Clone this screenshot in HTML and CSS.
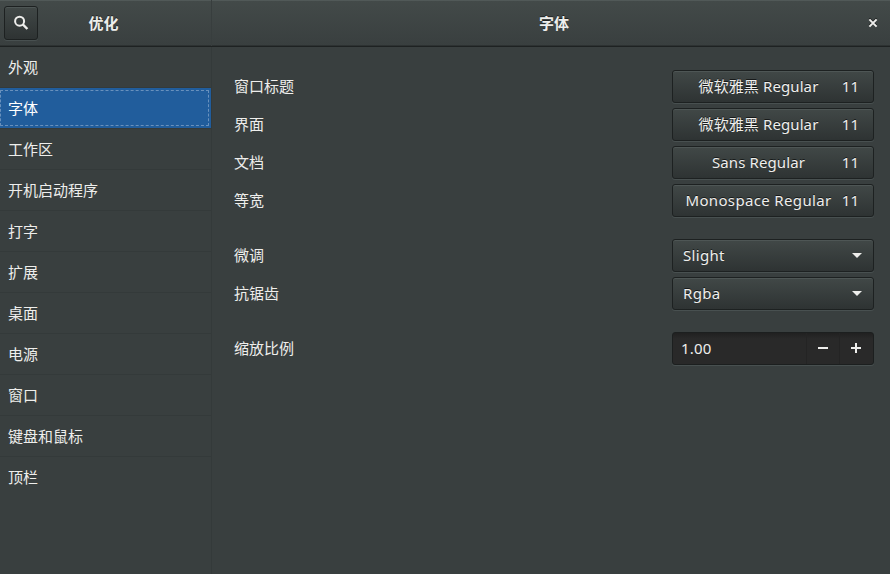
FILE: index.html
```html
<!DOCTYPE html>
<html lang="zh-CN">
<head>
<meta charset="utf-8">
<title>优化</title>
<link rel="stylesheet" href="styles.css">
</head>
<body>
<div class="window">
  <header class="titlebar">
    <div class="titlebar-side">
      <button class="button search" aria-label="搜索"><svg width="16" height="16" viewBox="0 0 16 16"><circle cx="6.6" cy="6.2" r="4.5" fill="none" stroke="#eeeeec" stroke-width="2"/><path d="M9.8 9.4L14.4 14" stroke="#eeeeec" stroke-width="2.4"/></svg></button>
      <h1 class="title">优化</h1>
    </div>
    <div class="titlebar-main">
      <h2 class="title">字体</h2>
      <button class="close" aria-label="关闭"><svg width="10" height="10" viewBox="0 0 10 10"><path d="M1.4 1.4L8.6 8.6M8.6 1.4L1.4 8.6" stroke="#eeeeec" stroke-width="2"/></svg></button>
    </div>
  </header>
  <div class="body">
    <nav class="sidebar">
      <a class="item">外观</a>
      <a class="item selected">字体</a>
      <a class="item">工作区</a>
      <a class="item">开机启动程序</a>
      <a class="item">打字</a>
      <a class="item">扩展</a>
      <a class="item">桌面</a>
      <a class="item">电源</a>
      <a class="item">窗口</a>
      <a class="item">键盘和鼠标</a>
      <a class="item last">顶栏</a>
    </nav>
    <main class="content">
      <section class="group">
        <div class="row"><span class="label">窗口标题</span><button class="button font"><span class="family">微软雅黑 Regular</span><span class="size">11</span></button></div>
        <div class="row"><span class="label">界面</span><button class="button font"><span class="family">微软雅黑 Regular</span><span class="size">11</span></button></div>
        <div class="row"><span class="label">文档</span><button class="button font"><span class="family">Sans Regular</span><span class="size">11</span></button></div>
        <div class="row"><span class="label">等宽</span><button class="button font"><span class="family wide">Monospace Regular</span><span class="size">11</span></button></div>
      </section>
      <section class="group">
        <div class="row"><span class="label">微调</span><button class="button combo"><span class="choice">Slight</span><svg width="10" height="5" viewBox="0 0 10 5"><path d="M0 0H10L5 5Z" fill="#eeeeec"/></svg></button></div>
        <div class="row"><span class="label">抗锯齿</span><button class="button combo"><span class="choice">Rgba</span><svg width="10" height="5" viewBox="0 0 10 5"><path d="M0 0H10L5 5Z" fill="#eeeeec"/></svg></button></div>
      </section>
      <section class="group">
        <div class="row"><span class="label">缩放比例</span>
          <div class="spin">
            <span class="value">1.00</span>
            <button class="step" aria-label="减少"><svg width="10" height="10" viewBox="0 0 10 10"><path d="M0 5H10" stroke="#eeeeec" stroke-width="2"/></svg></button>
            <button class="step" aria-label="增加"><svg width="10" height="10" viewBox="0 0 10 10"><path d="M0 5H10M5 0V10" stroke="#eeeeec" stroke-width="2"/></svg></button>
          </div>
        </div>
      </section>
    </main>
  </div>
</div>
</body>
</html>
```
FILE: styles.css
```css
* { box-sizing: border-box; }

body {
  margin: 0;
  background: #393f3f;
  color: #eeeeec;
  font: 15px/20px "Noto Sans", "Noto Sans CJK SC", sans-serif;
}

button {
  margin: 0;
  padding: 0;
  border: 0;
  background: none;
  color: inherit;
  font: inherit;
}

svg { display: block; }

.window {
  display: flex;
  flex-direction: column;
  width: 890px;
  height: 574px;
  overflow: hidden;
}

.titlebar {
  display: flex;
  flex: none;
  height: 47px;
  border-bottom: 1px solid #1e2222;
  background: linear-gradient(#434a49, #393f3f);
  box-shadow: inset 0 1px #515958, inset 0 -1px #2d3232;
}

.titlebar-side {
  display: flex;
  align-items: center;
  width: 212px;
  padding-left: 4px;
  border-right: 1px solid #383e3e;
}

.titlebar-main {
  display: flex;
  flex: 1;
  align-items: center;
  padding: 0 12px 0 17px;
}

.title {
  flex: 1;
  margin: 0;
  font-size: 15px;
  font-weight: 700;
  text-align: center;
  text-shadow: 0 -1px rgba(0, 0, 0, 0.5);
}

.titlebar-side .title { padding-right: 42px; }

.titlebar-main .title { padding-left: 11px; }

.close svg { filter: drop-shadow(0 -1px 0 rgba(0, 0, 0, 0.6)); }

.button {
  border: 1px solid #1d2121;
  border-radius: 3px;
  background: linear-gradient(#414847, #2e3333);
  box-shadow: inset 0 1px #4e5655, 0 1px #485050;
  text-shadow: 0 -1px rgba(0, 0, 0, 0.6);
}

.search {
  display: grid;
  place-items: center;
  width: 34px;
  height: 34px;
}

.body {
  display: flex;
  flex: 1;
}

.sidebar {
  width: 212px;
  border-right: 1px solid #343a3a;
}

.item {
  display: flex;
  align-items: center;
  height: 41px;
  padding-left: 8px;
  border-bottom: 1px solid #343a3a;
}

.item.last { border-bottom-color: transparent; }

.selected {
  position: relative;
  background: #215d9c;
  color: #fff;
}

.selected::after {
  position: absolute;
  inset: 2px 2px 2px 0;
  border: 1px dashed #6991bd;
  border-radius: 1px;
  content: "";
}

.content {
  display: flex;
  flex: 1;
  flex-direction: column;
  gap: 22px;
  padding: 23px 16px 0 22px;
}

.group {
  display: flex;
  flex-direction: column;
  gap: 5px;
}

.row {
  display: flex;
  align-items: center;
  justify-content: space-between;
  height: 33px;
}

.label,
.family,
.size,
.choice,
.value { padding-bottom: 2px; }

.font,
.combo,
.spin {
  display: flex;
  align-items: center;
  width: 202px;
  height: 33px;
}

.font { padding: 0 14px 0 12px; }

.family {
  flex: 1;
  letter-spacing: 0.1px;
  white-space: nowrap;
}

.family.wide { letter-spacing: 0.35px; }

.size {
  width: 27px;
  text-align: right;
}

.choice { letter-spacing: 0.3px; }

.combo {
  justify-content: space-between;
  padding: 0 11px 0 10px;
}

.spin {
  padding-right: 1px;
  border: 1px solid #1c1f1f;
  border-radius: 3px;
  background: linear-gradient(#202020, #292929 6px);
  box-shadow: 0 1px #485050;
}

.value {
  flex: 1;
  padding-left: 8px;
  letter-spacing: 0.2px;
}

.step {
  display: grid;
  place-items: center;
  width: 33px;
  height: 31px;
  padding-bottom: 1px;
  border-left: 1px solid #242424;
}
```
